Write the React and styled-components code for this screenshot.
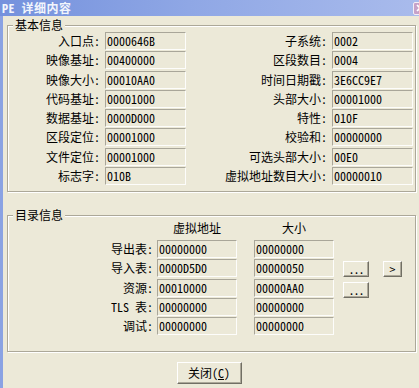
import React from 'react';
import styled, { createGlobalStyle } from 'styled-components';

const Global = createGlobalStyle`
  html, body { margin: 0; padding: 0; background: #ece9d8; }
  body {
    font-family: "Noto Sans Mono CJK SC", "Noto Sans CJK SC", "DejaVu Sans Mono", monospace;
    font-size: 12px;
    color: #000;
  }
`;

const Window = styled.div`
  width: 419px;
  height: 388px;
  overflow: hidden;
  display: flex;
  flex-direction: column;
  background: #ece9d8;
`;

const TitleBar = styled.div`
  flex: none;
  height: 16px;
  display: flex;
  align-items: center;
  justify-content: space-between;
  padding-left: 2px;
  background: linear-gradient(to right, #7491dd 0%, #8fa7e5 45%, #a9bbec 100%);
`;

const Title = styled.span`
  color: #f2f5fc;
  font-weight: bold;
  font-size: 12px;
  line-height: 16px;
  letter-spacing: 0.5px;
  white-space: pre;
`;

const CloseBox = styled.div`
  flex: none;
  width: 14px;
  height: 13px;
  margin-right: -8px;
  box-sizing: border-box;
  border: 1px solid #f4eef6;
  border-radius: 2px;
  background: #c6a2c9;
  display: flex;
  align-items: center;
  justify-content: center;
`;

const Body = styled.div`
  flex: 1;
  display: flex;
  min-height: 0;
`;

const Frame = styled.div`
  flex: none;
  width: 3px;
  background: #8aa2e3;
`;

const Content = styled.div`
  flex: 1;
  display: flex;
  flex-direction: column;
  padding-left: 4px;
`;

const Group = styled.section`
  position: relative;
  width: 409px;
  box-sizing: border-box;
  margin-top: ${p => p.$top}px;
  border: 1px solid #aca899;
  box-shadow: inset 1px 1px 0 #fff, 1px 1px 0 #fff;
  padding: ${p => p.$pad};
`;

const Legend = styled.span`
  position: absolute;
  top: -8px;
  left: 5px;
  padding: 0 2px;
  background: #ece9d8;
  font-family: "Noto Sans CJK SC", sans-serif;
  font-size: 12px;
  line-height: 14px;
`;

const BasicGrid = styled.div`
  display: grid;
  grid-template-columns: 95px 83px 144px 83px;
  grid-auto-rows: 18px;
  row-gap: 1.25px;
  align-items: center;
`;

const DirGrid = styled.div`
  display: grid;
  grid-template-columns: 147px 82px 97px 35px 33px;
  grid-template-rows: 18px;
  grid-auto-rows: 18px;
  row-gap: 1.25px;
`;

const Label = styled.div`
  text-align: right;
  padding-right: ${p => p.$pr || 3}px;
  line-height: 18px;
  white-space: pre;
`;

const Field = styled.div`
  justify-self: end;
  width: ${p => p.$w}px;
  height: 18px;
  box-sizing: border-box;
  border: 1px solid;
  border-color: #a9a699 #fdfdfb #fdfdfb #a9a699;
  padding-left: 1px;
  line-height: 16px;
  white-space: pre;
`;

const HeadCell = styled.div`
  justify-self: end;
  width: 80px;
  text-align: center;
  line-height: 14px;
  align-self: start;
`;

const Btn = styled.button`
  justify-self: end;
  align-self: start;
  margin-top: ${p => p.$mt || 2}px;
  width: ${p => p.$w}px;
  height: 16px;
  padding: 0;
  box-sizing: border-box;
  border: 1px solid;
  border-color: #fff #716f64 #716f64 #fff;
  box-shadow: inset -1px -1px 0 #aca899;
  background: #ece9d8;
  font-family: inherit;
  font-size: 12px;
  line-height: 14px;
  color: #000;
  letter-spacing: ${p => p.$ls || 0}px;
`;

const Footer = styled.div`
  display: flex;
  justify-content: center;
  padding-right: 8px;
  margin-top: 10px;
`;

const CloseButton = styled.button`
  width: 65px;
  height: 22px;
  padding: 0;
  box-sizing: border-box;
  border: 1px solid;
  border-color: #fff #716f64 #716f64 #fff;
  box-shadow: inset -1px -1px 0 #aca899;
  background: #ece9d8;
  font-family: inherit;
  font-size: 12px;
  color: #000;
  line-height: 18px;
`;

const basic = [
  ['入口点:', '0000646B', '子系统:', '0002'],
  ['映像基址:', '00400000', '区段数目:', '0004'],
  ['映像大小:', '00010AA0', '时间日期戳:', '3E6CC9E7'],
  ['代码基址:', '00001000', '头部大小:', '00001000'],
  ['数据基址:', '0000D000', '特性:', '010F'],
  ['区段定位:', '00001000', '校验和:', '00000000'],
  ['文件定位:', '00001000', '可选头部大小:', '00E0'],
  ['标志字:', '010B', '虚拟地址数目大小:', '00000010'],
];

const dirs = [
  ['导出表:', '00000000', '00000000', false, false],
  ['导入表:', '0000D5D0', '00000050', true, true],
  ['资源:', '00010000', '00000AA0', true, false],
  ['TLS 表:', '00000000', '00000000', false, false],
  ['调试:', '00000000', '00000000', false, false],
];

export default function App() {
  return (
    <Window>
      <Global />
      <TitleBar>
        <Title>PE 详细内容</Title>
        <CloseBox>
          <svg width="8" height="8" viewBox="0 0 8 8">
            <path d="M1 1L7 7M7 1L1 7" stroke="#fff" strokeWidth="1.6" />
          </svg>
        </CloseBox>
      </TitleBar>
      <Body>
        <Frame />
        <Content>
          <Group $top={9} $pad="6px 0 6px 0">
            <Legend>基本信息</Legend>
            <BasicGrid>
              {basic.map(([l1, v1, l2, v2]) => (
                <React.Fragment key={l1}>
                  <Label>{l1}</Label>
                  <Field $w={81}>{v1}</Field>
                  <Label>{l2}</Label>
                  <Field $w={81}>{v2}</Field>
                </React.Fragment>
              ))}
            </BasicGrid>
          </Group>
          <Group $top={23} $pad="5px 0 16px 0">
            <Legend>目录信息</Legend>
            <DirGrid>
              <div />
              <HeadCell>虚拟地址</HeadCell>
              <HeadCell>大小</HeadCell>
              <div />
              <div />
              {dirs.map(([l, a, s, more, next], i) => (
                <React.Fragment key={l}>
                  <Label $pr={2}>{l}</Label>
                  <Field $w={80}>{a}</Field>
                  <Field $w={80}>{s}</Field>
                  {more ? <Btn $w={26} $mt={i === 1 ? 2 : 3} $ls={-1}>...</Btn> : <div />}
                  {next ? <Btn $w={19} $mt={2}>&gt;</Btn> : <div />}
                </React.Fragment>
              ))}
            </DirGrid>
          </Group>
          <Footer>
            <CloseButton>关闭(<u>C</u>)</CloseButton>
          </Footer>
        </Content>
      </Body>
    </Window>
  );
}
